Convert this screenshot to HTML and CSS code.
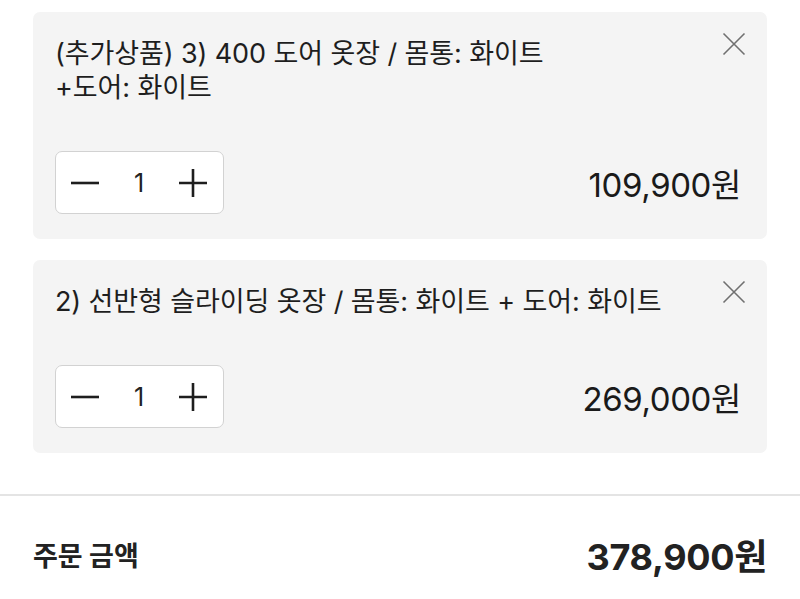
FILE: index.html
```html
<!DOCTYPE html>
<html lang="ko">

<head>
    <meta charset="UTF-8">
    <meta name="viewport" content="width=device-width, initial-scale=1.0">
    <title>주문 옵션</title>
    <link rel="stylesheet" href="styles.css">
</head>

<body>
    <div class="option-list">
        <div class="option-item">
            <div class="option-item-head">
                <p class="option-item-name">(추가상품) 3) 400 도어 옷장 / 몸통: 화이트<br>+도어: 화이트</p>
                <button class="option-item-remove" aria-label="삭제">
                    <svg viewBox="0 0 24 24" width="24" height="24">
                        <path d="M1.5 1.5 L22.5 22.5 M22.5 1.5 L1.5 22.5" />
                    </svg>
                </button>
            </div>
            <div class="option-item-foot">
                <div class="qty">
                    <button class="qty-btn" aria-label="빼기">
                        <svg viewBox="0 0 28 28" width="28" height="28"><path d="M0 14 H28" /></svg>
                    </button>
                    <span class="qty-count">1</span>
                    <button class="qty-btn" aria-label="더하기">
                        <svg viewBox="0 0 28 28" width="28" height="28"><path d="M0 14 H28 M14 0 V28" /></svg>
                    </button>
                </div>
                <span class="option-item-price">109,900원</span>
            </div>
        </div>

        <div class="option-item">
            <div class="option-item-head">
                <p class="option-item-name">2) 선반형 슬라이딩 옷장 / 몸통: 화이트 + 도어: 화이트</p>
                <button class="option-item-remove" aria-label="삭제">
                    <svg viewBox="0 0 24 24" width="24" height="24">
                        <path d="M1.5 1.5 L22.5 22.5 M22.5 1.5 L1.5 22.5" />
                    </svg>
                </button>
            </div>
            <div class="option-item-foot">
                <div class="qty">
                    <button class="qty-btn" aria-label="빼기">
                        <svg viewBox="0 0 28 28" width="28" height="28"><path d="M0 14 H28" /></svg>
                    </button>
                    <span class="qty-count">1</span>
                    <button class="qty-btn" aria-label="더하기">
                        <svg viewBox="0 0 28 28" width="28" height="28"><path d="M0 14 H28 M14 0 V28" /></svg>
                    </button>
                </div>
                <span class="option-item-price">269,000원</span>
            </div>
        </div>
    </div>

    <div class="order-total">
        <span class="order-total-label">주문 금액</span>
        <span class="order-total-price">378,900원</span>
    </div>
</body>

</html>
```

FILE: styles.css
```css
* {
    box-sizing: border-box;
}

body {
    margin: 0;
    background: #fff;
    color: #1c1c1c;
    font-family: Inter, "Noto Sans CJK KR", sans-serif;
}

button {
    border: 0;
    background: none;
    padding: 0;
    cursor: pointer;
}

.option-list {
    display: flex;
    flex-direction: column;
    gap: 21px;
    padding: 12px 33px 0;
}

.option-item {
    background: #f4f4f4;
    border-radius: 7px;
    padding: 25px 21px 25px 22px;
}

.option-item-head {
    display: flex;
    justify-content: space-between;
    align-items: flex-start;
    gap: 20px;
}

.option-item-name {
    margin: 0;
    font-size: 27px;
    line-height: 34px;
    letter-spacing: -0.1px;
    color: #1e1e1e;
}

.option-item-remove {
    flex: none;
    width: 24px;
    height: 24px;
    margin-top: -5px;
}

.option-item-remove svg {
    display: block;
    fill: none;
    stroke: #707070;
    stroke-width: 1.6;
}

.option-item-foot {
    display: flex;
    justify-content: space-between;
    align-items: center;
    margin-top: 46px;
}

.qty {
    display: flex;
    justify-content: space-between;
    align-items: center;
    width: 169px;
    height: 63px;
    padding: 0 16px 0 15px;
    background: #fff;
    border: 1px solid #d2d2d2;
    border-radius: 7px;
}

.qty-btn svg {
    display: block;
    fill: none;
    stroke: #1e1e1e;
    stroke-width: 2.6;
}

.qty-count {
    font-size: 25px;
    color: #222;
}

.option-item-price {
    margin-right: 5px;
    font-size: 33px;
    letter-spacing: -0.4px;
    color: #1a1a1a;
}

.order-total {
    display: flex;
    justify-content: space-between;
    align-items: center;
    margin-top: 41px;
    padding: 32px 33px 0;
    border-top: 2px solid #e4e4e4;
}

.order-total-label {
    font-size: 27px;
    font-weight: 700;
    color: #222;
}

.order-total-price {
    font-size: 36px;
    font-weight: 700;
    letter-spacing: -0.3px;
    color: #222;
}
```
